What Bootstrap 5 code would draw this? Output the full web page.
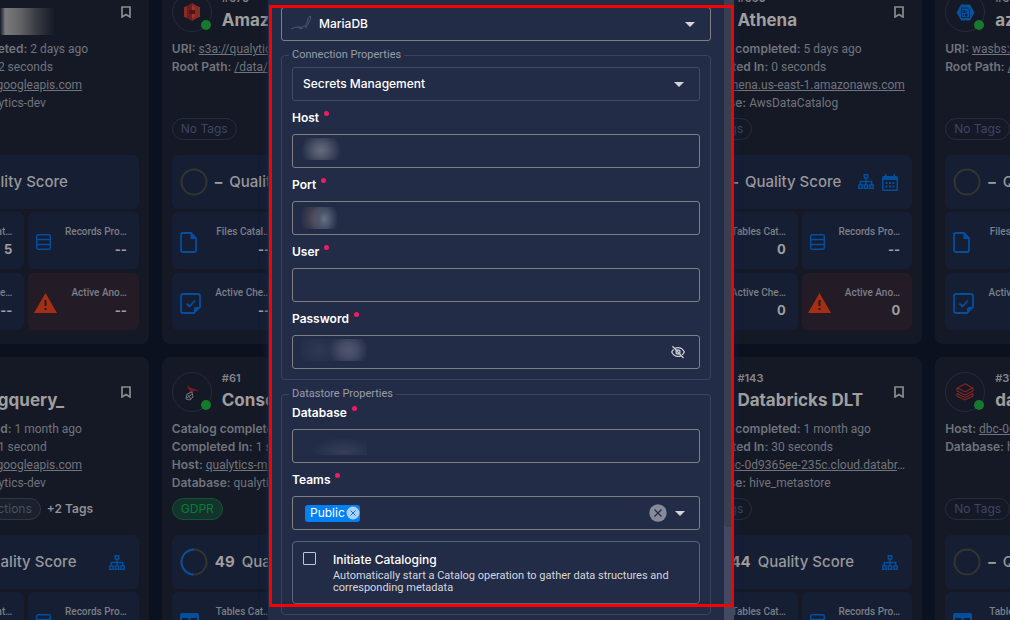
<!DOCTYPE html>
<html lang="en">
<head>
<meta charset="utf-8">
<meta name="viewport" content="width=device-width, initial-scale=1">
<title>Datastores</title>
<link href="https://cdn.jsdelivr.net/npm/bootstrap@5.3.0/dist/css/bootstrap.min.css" rel="stylesheet">
<style>
  body { background: #0c1120; color: #8e9095; font: 500 12px/18px Inter, "Open Sans", sans-serif; }
  svg { display: block; flex: none; }

  /* datastore grid behind the dialog */
  .backdrop-page { height: 100vh; }
  .store-grid { display: grid; grid-template-columns: repeat(5, 1fr); gap: 13px; margin: -23px -170px 0 -96px; }
  .store { background: #151926; border-radius: 8px; padding: 15px 10px 14px; min-width: 0; }
  .store-head { height: 40px; }
  .avatar { width: 40px; height: 40px; border: 1px solid #262c3d; border-radius: 50%; }
  .status-dot { right: 0; bottom: 1px; width: 10px; height: 10px; border-radius: 50%; background: #16792d; }
  .store-title { margin-left: 10px; }
  .store-id { font-size: 11px; line-height: 12px; font-weight: 600; color: #84868b; }
  .store-name { font-size: 17px; line-height: 24px; margin: 4px 0 0; font-weight: 700; color: #a09f9e; white-space: nowrap; }
  .info { height: 72px; margin-top: 8px; color: #70747c; font-weight: 400; font-family: Roboto, sans-serif; }
  .info b { font-weight: 600; color: #70747c; font-family: Inter, sans-serif; }
  .info a { color: #70747c; }
  .tags { height: 22px; margin: 6px 0 15px; line-height: 22px; }
  .pill { border: 1px solid #272d3f; border-radius: 11px; padding: 0 8px; line-height: 20px; color: #3c4566; font-weight: 400; white-space: nowrap; }
  .pill-grey { background: #1a202e; border-color: #303645; color: #4b505d; margin-left: 36px; }
  .pill-green { background: #12342c; border-color: #175231; color: #0e7a35; }
  .more { color: #8f9195; font-weight: 600; margin-left: 6px; }
  .tile { background: #161e33; border-radius: 6px; }
  .score { height: 54px; padding: 0 14px 0 8px; font-size: 15px; color: #98989a; white-space: nowrap; }
  .score b { color: #a09f9e; margin: 0 7px; }
  .stats { display: grid; grid-template-columns: 1fr 1fr; gap: 4px; margin-top: 3px; }
  .stat { height: 57px; padding: 11px 12px 0 8px; }
  .stat-label { font: 500 10px/18px Roboto, sans-serif; color: #7c7f87; white-space: nowrap; }
  .stat-value { font-size: 13px; line-height: 16px; font-weight: 700; color: #a09f9e; }
  .tile-red { background: #231c27; }
  .tile-red .stat-icon { margin-left: -2px; }
  .blue { color: #034f9d; }
  .smudge { width: 90px; height: 27px; background: linear-gradient(90deg, #15192600 40%, #7a7a7b 46%, #646568 62%, #3a3c44 80%, #1a1e2a 98%); }

  /* dialog */
  .overlay { inset: 0; padding-right: 8px; }
  .sheet { width: 466px; max-width: 100%; background: #232c47; box-shadow: 0 0 7px #142340; color: #fff; }
  .sheet-body { padding: 7px 23px 0 13px; }
  .scroll-rail { top: 0; right: 0; bottom: 0; width: 10px; background: #424961; }
  .scroll-thumb { height: 85%; background: #393e51; border-radius: 0 0 4px 4px; }
  .highlight { inset: 5px 0 13px 1px; border: 3px solid #f90000; pointer-events: none; }
  .field { height: 34px; background-color: transparent; border: 1px solid #7f8086; border-radius: 3px; color: #fff; font-size: 12px; font-weight: 500; }
  .field:focus { background-color: transparent; color: #fff; box-shadow: none; border-color: #a0a2a8; }
  select.field { --bs-form-select-bg-img: url("data:image/svg+xml,%3csvg xmlns='http://www.w3.org/2000/svg' viewBox='0 0 10 5'%3e%3cpath d='M0 0h10L5 5z' fill='%23d3d5da'/%3e%3c/svg%3e"); background-size: 10px 5px; background-position: right 15px center; padding: 0 30px 0 10px; }
  select.field-quiet { border-color: #434b63; margin-top: 10px; }
  select.field-engine { padding-left: 37px; }
  .engine-mark { left: 10px; top: 8px; color: #4c5670; }
  .group { border: 1px solid #3c445d; border-radius: 4px; padding: 0 10px 10px; margin: 7px 0 0; }
  .group legend { float: none; width: auto; margin: 0 0 -5px -3px; padding: 0 3px; font: 400 11px/14px Roboto, sans-serif; color: #989ca8; }
  .field-label { display: block; height: 33px; line-height: 33px; font-weight: 600; color: #fff; }
  .field-label::after { content: ""; display: inline-block; width: 5px; height: 5px; border-radius: 50%; background: #ee1c60; margin-left: 5px; vertical-align: 6px; }
  .masked { left: 9px; top: 4px; height: 22px; width: 40px; pointer-events: none; }
  .mask-a { background: radial-gradient(20px 18px at 50% 55%, #636a7b 0, #555c70 30%, #232c4700 100%); }
  .mask-b { background: radial-gradient(14px 18px at 58% 55%, #657283 0, #4a566b 40%, #232c4700 100%), radial-gradient(16px 20px at 38% 50%, #5c4f58 0, #232c4700 100%); top: 6px; }
  .mask-c { width: 66px; background: radial-gradient(20px 18px at 72% 50%, #50566e 0, #464c66 40%, #232c4700 100%), radial-gradient(24px 18px at 28% 50%, #2f3853, #232c4700 100%); }
  .mask-d { width: 66px; top: 8px; height: 18px; background: radial-gradient(32px 14px at 65% 80%, #363e57 0, #232c4700 100%); }
  .peek { right: 15px; top: 10px; }
  .icon-btn { background: none; border: 0; padding: 0; color: #c9cbd2; }
  .team-box { padding: 0 14px 0 12px; }
  .chip { background: #0380f3; color: #fff; border-radius: 3px; height: 17px; padding: 0 0 0 5px; font-weight: 400; gap: 1px; }
  .option-box { border: 1px solid #5c6277; border-radius: 4px; height: 63px; margin-top: 11px; padding: 9px 10px; }
  .option-box .tick { width: 13px; height: 13px; margin: 1px 17px 0 0; background-color: transparent; border: 1px solid #c2c5cc; border-radius: 1px; flex: none; }
  .option-title { display: block; line-height: 17px; color: #fff; }
  .option-note { display: block; font: 400 11px/12px Roboto, sans-serif; color: #d5d8de; margin-top: 2px; }
</style>
</head>
<body class="position-relative">

<svg width="0" height="0" class="position-absolute" aria-hidden="true">
  <symbol id="i-bookmark" viewBox="0 0 10 12"><path d="M1 1h8v10L5 8.500 1 11z" fill="none" stroke="#8b8c90" stroke-width="1.700"/></symbol>
  <symbol id="i-rows" viewBox="0 0 15 16"><g fill="none" stroke="currentColor" stroke-width="1.400"><rect x=".7" y=".7" width="13.600" height="14.600" rx="1.500"/><path d="M1 5.500h13M1 10.500h13"/></g></symbol>
  <symbol id="i-file" viewBox="0 0 17 21"><path d="M11 1H2.500Q1 1 1 2.500v16Q1 20 2.500 20h12q1.500 0 1.500-1.500V6z" fill="none" stroke="currentColor" stroke-width="1.800"/><path d="M10.500 1v6H16z" fill="currentColor"/></symbol>
  <symbol id="i-table" viewBox="0 0 19 19"><path fill="currentColor" fill-rule="evenodd" d="M2 0h15a2 2 0 0 1 2 2v15a2 2 0 0 1-2 2H2a2 2 0 0 1-2-2V2a2 2 0 0 1 2-2zm0 5v5h6.500V5zm8.500 0v5H17V5zM2 12v5h6.500v-5zm8.500 0v5H17v-5z"/></symbol>
  <symbol id="i-check" viewBox="0 0 21 21"><g fill="none" stroke="currentColor" stroke-width="1.800"><path d="M3 1h15q2 0 2 2v11l-6 6H3q-2 0-2-2V3q0-2 2-2z"/><path d="M6.500 10.500l3 3 5.500-6"/></g><path d="M14 20v-4q0-2 2-2h4z" fill="currentColor"/></symbol>
  <symbol id="i-warn" viewBox="0 0 23 20"><path d="M11.500 0L23 20H0z" fill="#a62e13"/><path d="M10.500 7h2v6h-2zM10.500 15h2v2h-2z" fill="#231c27"/></symbol>
  <symbol id="i-tree" viewBox="0 0 16 15"><g fill="none" stroke="currentColor" stroke-width="1.500"><path d="M6.300 .7h3.400v3.300H6.300zM.8 11h3.300v3.300H.8zM6.300 11h3.400v3.300H6.300zM11.900 11h3.300v3.300h-3.300zM8 4v7M2.300 11V7.500h11.400V11"/></g></symbol>
  <symbol id="i-cal" viewBox="0 0 16 17"><path fill="currentColor" fill-rule="evenodd" d="M3 0h1.500v2h7V0H13v2h1.500Q16 2 16 3.500v12q0 1.500-1.500 1.500h-13Q0 17 0 15.500v-12Q0 2 1.500 2H3zM1.500 6v9.500h13V6z"/><path stroke="currentColor" stroke-width="2" stroke-dasharray="2 1.500" d="M3.500 9h9M3.500 12.500h9"/></symbol>
  <symbol id="l-s3" viewBox="0 0 16 18"><path d="M0 4l3-1v12l-3-1zM16 4l-3-1v12l3-1z" fill="#8b2a25"/><path d="M3 3l5-3v18l-5-3z" fill="#6b2020"/><path d="M13 3L8 0v18l5-3z" fill="#862a25"/><path d="M5 7h6v4H5z" fill="#4a181b"/><path d="M8 3l2.500 1v3H8zM8 11h2.500v3L8 15z" fill="#a3352d"/></symbol>
  <symbol id="l-sql" viewBox="0 0 16 17"><path d="M4 1q1 3 4 3.500Q12 5 15 7q-5-1-7 1-3 2-6 2 4-1 4-3Q3 4 4 1z" fill="#7c1a22"/><path d="M3 10l5-2 1 5-3 3-4-1zM4 11l3 4M3 14l5-4" fill="none" stroke="#70747c" stroke-width="1"/></symbol>
  <symbol id="l-azure" viewBox="0 0 19 17"><path d="M5 .5h9l4.500 8-4.500 8H5l-4.500-8z" fill="#07529a"/><path d="M5.500 4h6l2 2v7.500h-8z" fill="none" stroke="#0d2648"/><path d="M7 6.500h1.500v2H7zM10 6.500v2M7.500 10v2M9.500 10h1.500v2H9.500z" fill="none" stroke="#0d2648"/></symbol>
  <symbol id="l-bricks" viewBox="0 0 18 18"><g fill="none" stroke="#8a2622" stroke-width="1.100"><path d="M9 .8l7.500 4.200L9 9 1.500 5z"/><path d="M1 8l8 4 8-4M1 10.500l8 4 8-4M1 13l8 4 8-4M1 5v3M17 5v3M1 10.500V13M17 10.500V13"/></g></symbol>
</svg>

<div class="backdrop-page overflow-hidden"><main class="store-grid" id="stores"></main></div>

<div class="overlay position-absolute d-flex justify-content-center overflow-hidden">
  <div class="sheet position-relative" role="dialog" aria-label="Add datastore">
    <form class="sheet-body">
      <div class="position-relative">
        <select class="form-select field field-engine" aria-label="Connector"><option>MariaDB</option></select>
        <svg class="engine-mark position-absolute" width="20" height="16" viewBox="0 0 20 16" fill="none" stroke="currentColor"><path d="M0 14q4-2 7-2 5 1 7-1 3-3 2.500-6Q17 2 19.500 1 20 4 18 7q-1 3-3 5M7 12l2 1.500 3-.5M14 11l2 2.500"/></svg>
      </div>

      <fieldset class="group">
        <legend>Connection Properties</legend>
        <select class="form-select field field-quiet" aria-label="Secrets Management"><option>Secrets Management</option></select>
        <label class="field-label" for="host">Host</label>
        <div class="position-relative"><input id="host" class="form-control field" type="text"><span class="masked mask-a position-absolute"></span></div>
        <label class="field-label" for="port">Port</label>
        <div class="position-relative"><input id="port" class="form-control field" type="text"><span class="masked mask-b position-absolute"></span></div>
        <label class="field-label" for="user">User</label>
        <input id="user" class="form-control field" type="text">
        <label class="field-label" for="password">Password</label>
        <div class="position-relative"><input id="password" class="form-control field" type="password"><span class="masked mask-c position-absolute"></span>
          <button type="button" class="icon-btn peek position-absolute" aria-label="Show password"><svg width="14" height="14" viewBox="0 0 14 14" fill="none" stroke="currentColor" stroke-width="1.300"><path d="M4 3.300Q5.400 2.600 7 2.600 11.300 2.600 13.300 7q-.8 1.700-2.100 2.800M9.700 10.800Q8.500 11.400 7 11.400 2.700 11.400.7 7q.7-1.500 1.900-2.600M1.500 1.300l11 11.700"/><circle cx="7" cy="7" r="2"/></svg></button>
        </div>
      </fieldset>

      <fieldset class="group">
        <legend>Datastore Properties</legend>
        <label class="field-label" for="database">Database</label>
        <div class="position-relative"><input id="database" class="form-control field" type="text"><span class="masked mask-d position-absolute"></span></div>
        <label class="field-label" for="teams">Teams</label>
        <div class="field team-box d-flex align-items-center">
          <span class="chip d-flex align-items-center">Public
            <button type="button" class="icon-btn" aria-label="Remove Public"><svg width="14" height="14" viewBox="0 0 14 14"><circle cx="7" cy="7" r="6.500" fill="#a9d0fa"/><path d="M4.500 4.500l5 5M9.500 4.500l-5 5" stroke="#0c76dc"/></svg></button>
          </span>
          <button type="button" class="icon-btn ms-auto" aria-label="Clear teams"><svg width="18" height="18" viewBox="0 0 18 18"><circle cx="9" cy="9" r="8.700" fill="#878b99"/><path d="M5.500 5.500l7 7M12.500 5.500l-7 7" stroke="#232c47" stroke-width="1.300"/></svg></button>
          <button type="button" class="icon-btn ms-2" id="teams" aria-label="Open teams"><svg width="10" height="5" viewBox="0 0 10 5"><path d="M0 0h10L5 5z" fill="#d3d5da"/></svg></button>
        </div>
        <label class="option-box d-flex" for="catalog">
          <input class="form-check-input tick" type="checkbox" id="catalog">
          <span><span class="option-title">Initiate Cataloging</span><span class="option-note">Automatically start a Catalog operation to gather data structures and corresponding metadata</span></span>
        </label>
      </fieldset>
    </form>
    <div class="scroll-rail position-absolute"><div class="scroll-thumb"></div></div>
    <div class="highlight position-absolute"></div>
  </div>
</div>

<script src="https://cdn.jsdelivr.net/npm/bootstrap@5.3.0/dist/js/bootstrap.bundle.min.js"></script>
<script>
  const icon = (id, w, h, cls = "blue") => `<svg class="${cls}" width="${w}" height="${h}"><use href="#${id}"/></svg>`;
  const link = t => `<a href="#">${t}</a>`;
  const none = `<span class="pill">No Tags</span>`;
  const stores = [
    { id: "", name: `<span class="smudge d-block"></span>`, info: [["Catalog completed", "2 days ago"], ["Completed In", "2 seconds"], ["Host", link("bigquery.googleapis.com")], ["Database", "qualytics-dev"]], tags: "", unit: "Tables Cat…", n: ["5", "--", "--", "--"] },
    { id: "#679", name: "Amazon S3", logo: ["l-s3", 16, 18], info: [["URI", link("s3a://qualytics-dev-data")], ["Root Path", link("/data/")]], tags: none, unit: "Files Catal…", n: ["--", "--", "--", "--"] },
    null,
    { id: "#660", name: "Athena", info: [["Catalog completed", "5 days ago"], ["Completed In", "0 seconds"], ["Host", link("athena.us-east-1.amazonaws.com")], ["Database", "AwsDataCatalog"]], tags: none, tools: icon("i-tree", 16, 15) + icon("i-cal", 16, 17, "blue ms-2"), unit: "Tables Cat…", n: ["0", "--", "0", "0"] },
    { id: "#676", name: "azure_blob", logo: ["l-azure", 19, 17], info: [["URI", link("wasbs://container")], ["Root Path", link("/")]], tags: none, unit: "Files Catal…", n: ["--", "--", "--", "--"] },
    { id: "", name: "a_bigquery_", info: [["Scan completed", "1 month ago"], ["Completed In", "1 second"], ["Host", link("bigquery.googleapis.com")], ["Database", "qualytics-dev"]], tags: `<span class="pill pill-grey">Transactions</span><span class="more">+2 Tags</span>`, score: 41, tools: icon("i-tree", 16, 15), unit: "Tables Cat…", n: ["5", "--", "--", "--"] },
    { id: "#61", name: "Consolidated", logo: ["l-sql", 16, 17], info: [["Catalog completed", "1 month ago"], ["Completed In", "1 second"], ["Host", link("qualytics-mssql")], ["Database", "qualytics"]], tags: `<span class="pill pill-green">GDPR</span>`, score: 49, unit: "Tables Cat…", n: ["7", "--", "0", "0"] },
    null,
    { id: "#143", name: "Databricks DLT", info: [["Catalog completed", "1 month ago"], ["Completed In", "30 seconds"], ["Host", link("dbc-0d9365ee-235c.cloud.databr") + "…"], ["Database", "hive_metastore"]], tags: none, score: 44, tools: icon("i-tree", 16, 15), unit: "Tables Cat…", n: ["7", "--", "0", "0"] },
    { id: "#31", name: "databricks", logo: ["l-bricks", 18, 18], info: [["Host", link("dbc-0d9365ee")], ["Database", "hive_metastore"]], tags: none, unit: "Tables Cat…", n: ["7", "--", "0", "0"] }
  ];
  const stat = (ic, label, value, cls = "") => `<div class="tile stat d-flex ${cls}"><div class="stat-icon pb-2 align-self-center">${ic}</div><div class="ms-auto text-end"><div class="stat-label">${label}</div><div class="stat-value">${value}</div></div></div>`;
  const ring = s => `<svg width="28" height="28" viewBox="0 0 28 28" fill="none" stroke-width="2"><circle cx="14" cy="14" r="12.500" stroke="#34352f"/>${s ? `<circle cx="14" cy="14" r="12.500" stroke="#034f9d" pathLength="100" stroke-dasharray="${s} 100" transform="rotate(${-90 - s * 3.6} 14 14)"/>` : ""}</svg>`;
  document.getElementById("stores").innerHTML = stores.map(s => !s ? `<section class="store"></section>` : `
    <section class="store">
      <div class="store-head d-flex">
        <div class="avatar position-relative d-flex align-items-center justify-content-center">${s.logo ? icon(...s.logo) : ""}<span class="status-dot position-absolute"></span></div>
        <div class="store-title"><div class="store-id">${s.id || "&nbsp;"}</div><h2 class="store-name">${s.name}</h2></div>
        <button type="button" class="icon-btn ms-auto me-2 align-self-center" aria-label="Bookmark">${icon("i-bookmark", 10, 12, "")}</button>
      </div>
      <div class="info">${s.info.map(([k, v]) => `<div class="text-truncate"><b>${k}:</b> ${v}</div>`).join("")}</div>
      <div class="tags d-flex">${s.tags}</div>
      <div class="tile score d-flex align-items-center">${ring(s.score)}<b>${s.score || "–"}</b><span>Quality Score</span><span class="ms-auto d-flex">${s.tools || ""}</span></div>
      <div class="stats">
        ${stat(s.unit[0] === "F" ? icon("i-file", 17, 21) : icon("i-table", 19, 19), s.unit, s.n[0])}
        ${stat(icon("i-rows", 15, 16), "Records Pro…", s.n[1])}
        ${stat(icon("i-check", 21, 21), "Active Che…", s.n[2])}
        ${stat(icon("i-warn", 23, 20, ""), "Active Ano…", s.n[3], "tile-red")}
      </div>
    </section>`).join("");
</script>
</body>
</html>
